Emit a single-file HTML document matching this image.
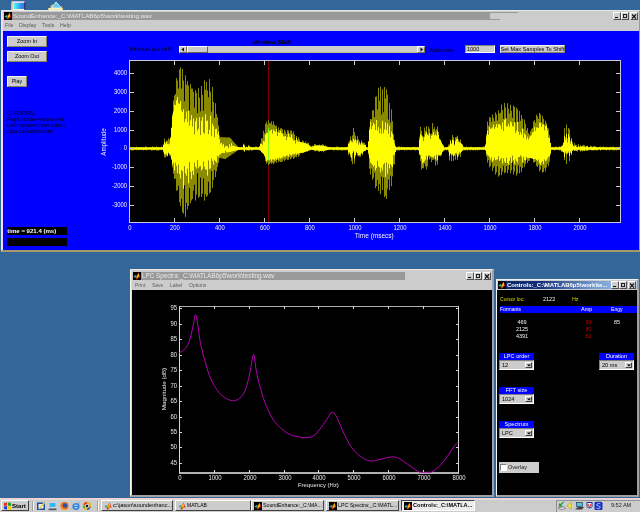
<!DOCTYPE html><html><head><meta charset="utf-8"><style>
html,body{margin:0;padding:0;}body{width:640px;height:512px;overflow:hidden;position:relative;background:#336699;}
div,svg{position:absolute;}.t{white-space:nowrap;font-family:"Liberation Sans", sans-serif;line-height:1;}
</style></head><body>
<svg style="left:0;top:0" width="70" height="11" viewBox="0 0 70 11"><defs><linearGradient id="scr" x1="0" x2="1"><stop offset="0" stop-color="#50f8ff"/><stop offset="1" stop-color="#2070e8"/></linearGradient></defs><rect x="11.5" y="1.2" width="13" height="8.8" fill="#dcdcf0"/><rect x="11.3" y="3" width="1.5" height="7" fill="#d8d090"/><rect x="23.8" y="2.5" width="1.8" height="7" fill="#40307a"/><rect x="14" y="3" width="9.8" height="6" fill="url(#scr)"/><rect x="13" y="9" width="11" height="1" fill="#fff8c0"/><path d="M50 7.5 Q50.5 4 53.5 4.5 L53 8Z" fill="#c8c050"/><path d="M61 5.5 Q63 6 62.8 8.5 L61 8.5Z" fill="#a09030"/><rect x="48.3" y="8" width="14.4" height="2.2" fill="#f8f0a0"/><path d="M56 2 L61.5 8 L51.5 8Z" fill="#60c8f8" stroke="#e8f0ff" stroke-width="0.9"/></svg>
<div style="left:1px;top:10px;width:639px;height:242px;background:#cccccc;border-left:1px solid #e8e8e8;border-top:1px solid #e8e8e8;border-right:1px solid #a0a070;border-bottom:2px solid #a89868;box-sizing:border-box"></div>
<div style="left:2px;top:11px;width:1px;height:239px;background:#f0d8f0"></div>
<div style="left:3px;top:11px;width:636px;height:9px;background:#cccccc"></div>
<div style="left:4px;top:12px;width:486px;height:8px;background:#999999"></div>
<div style="left:490px;top:12px;width:28px;height:1px;background:#999999"></div>
<div style="left:490px;top:19px;width:10px;height:1px;background:#999999"></div>
<svg style="left:4px;top:12px" width="8" height="8" viewBox="0 0 16 16"><rect width="16" height="16" fill="#000"/><path d="M1 9 L5 6 L8 8 L6 11 L3 11 Z" fill="#40a8a0"/><path d="M5 14 L8 7 L11 1 L13 6 L15 12 L12 10 L8 15 Z" fill="#d02800"/><path d="M7 12 L9 6 L11 2 L12 7 L11 10 L8 12Z" fill="#ffd000"/></svg>
<div class="t" style="left:13px;top:12.8px;font-size:6.26px;color:#e8e8e8;">SoundEnhance:_C:\MATLAB6p5\work\testing.wav</div>
<div style="left:613px;top:12px;width:8px;height:8px;background:#cccccc;border-top:1px solid #fff;border-left:1px solid #fff;border-right:1px solid #505050;border-bottom:1px solid #505050;box-sizing:border-box"></div>
<div style="left:621px;top:12px;width:8px;height:8px;background:#cccccc;border-top:1px solid #fff;border-left:1px solid #fff;border-right:1px solid #505050;border-bottom:1px solid #505050;box-sizing:border-box"></div>
<div style="left:630px;top:12px;width:8px;height:8px;background:#cccccc;border-top:1px solid #fff;border-left:1px solid #fff;border-right:1px solid #505050;border-bottom:1px solid #505050;box-sizing:border-box"></div>
<div style="left:615px;top:17px;width:3px;height:1px;background:#101010"></div>
<div style="left:623px;top:13.5px;width:4px;height:4px;border:1px solid #202020;border-top-width:1.5px;box-sizing:border-box"></div>
<svg style="left:631px;top:13.5px" width="6" height="5" viewBox="0 0 6 5"><path d="M1 0.5 L5 4.5 M5 0.5 L1 4.5" stroke="#101010" stroke-width="1.1"/></svg>
<div style="left:3px;top:20px;width:636px;height:11px;background:#cccccc"></div>
<div class="t" style="left:5px;top:23.4px;font-size:5.3px;color:#585858;">File</div>
<div class="t" style="left:19px;top:23.4px;font-size:5.3px;color:#585858;">Display</div>
<div class="t" style="left:42px;top:23.4px;font-size:5.3px;color:#585858;">Tools</div>
<div class="t" style="left:60px;top:23.4px;font-size:5.3px;color:#585858;">Help</div>
<div style="left:3px;top:31px;width:636px;height:219px;background:#0000ff"></div>
<div style="left:7px;top:36px;width:40px;height:11px;background:#cccccc;border-top:1px solid #f4f0f0;border-left:1px solid #f4f0f0;border-right:1px solid #8a8060;border-bottom:1px solid #8a8060;box-sizing:border-box"></div>
<div class="t" style="left:7px;top:39.475px;width:40px;text-align:center;font-size:5.45px;color:#000">Zoom In</div>
<div style="left:7px;top:51px;width:40px;height:11px;background:#cccccc;border-top:1px solid #f4f0f0;border-left:1px solid #f4f0f0;border-right:1px solid #8a8060;border-bottom:1px solid #8a8060;box-sizing:border-box"></div>
<div class="t" style="left:7px;top:54.475px;width:40px;text-align:center;font-size:5.45px;color:#000">Zoom Out</div>
<div style="left:7px;top:76px;width:20px;height:11px;background:#cccccc;border-top:1px solid #f4f0f0;border-left:1px solid #f4f0f0;border-right:1px solid #8a8060;border-bottom:1px solid #8a8060;box-sizing:border-box"></div>
<div class="t" style="left:7px;top:79.47500000000001px;width:20px;text-align:center;font-size:5.45px;color:#000">Play</div>
<div class="t" style="left:7px;top:110.8px;font-size:5.3px;color:#000;">CURSORS:</div>
<div class="t" style="left:7px;top:116.89999999999999px;font-size:5.3px;color:#000;">Right mouse=zoom end</div>
<div class="t" style="left:7px;top:123.0px;font-size:5.3px;color:#000;">Left mouse=zoom start +</div>
<div class="t" style="left:7px;top:129.1px;font-size:5.3px;color:#000;">data collection start</div>
<div style="left:7px;top:227px;width:60px;height:8px;background:#000"></div>
<div class="t" style="left:7.3px;top:227.6px;font-size:6.05px;color:#fff;font-weight:bold">time = 921.4 (ms)</div>
<div style="left:7px;top:238px;width:60px;height:8px;background:#000"></div>
<div class="t" style="left:253px;top:39.2px;font-size:6.0px;color:#000;font-weight:bold">Window Shift</div>
<div class="t" style="left:129.4px;top:47.4px;font-size:5.2px;color:#000;">Minimum (no shift)</div>
<div style="left:179px;top:46px;width:246px;height:7px;background:#cccccc;border-bottom:1px solid #c8c070;box-sizing:border-box"></div>
<div style="left:179px;top:46px;width:8px;height:7px;background:#cccccc;border-top:1px solid #fff;border-left:1px solid #fff;border-right:1px solid #7a7050;border-bottom:1px solid #7a7050;box-sizing:border-box"></div>
<svg style="left:181px;top:47px" width="4" height="5"><path d="M3 0.5 L0.5 2.5 L3 4.5Z" fill="#000"/></svg>
<div style="left:187px;top:46px;width:21px;height:7px;background:#cccccc;border-top:1px solid #fff;border-left:1px solid #fff;border-right:1px solid #6a6448;border-bottom:1px solid #6a6448;box-sizing:border-box"></div>
<div style="left:417px;top:46px;width:8px;height:7px;background:#cccccc;border-top:1px solid #fff;border-left:1px solid #fff;border-right:1px solid #7a7050;border-bottom:1px solid #7a7050;box-sizing:border-box"></div>
<svg style="left:420px;top:47px" width="4" height="5"><path d="M0.5 0.5 L3 2.5 L0.5 4.5Z" fill="#000"/></svg>
<div class="t" style="left:430.2px;top:47.6px;font-size:5.3px;color:#000;">Maximum</div>
<div style="left:465px;top:45px;width:30px;height:8px;background:#cccccc;border-top:1px solid #808080;border-left:1px solid #808080;border-right:1px solid #fff;border-bottom:1px solid #fff;box-sizing:border-box"></div>
<div class="t" style="left:467px;top:47px;font-size:5.5px;color:#000;">1000</div>
<div style="left:500px;top:45px;width:65px;height:8px;background:#cccccc;border-top:1px solid #f4f0f0;border-left:1px solid #f4f0f0;border-right:1px solid #8a8060;border-bottom:1px solid #8a8060;box-sizing:border-box"></div>
<div class="t" style="left:500px;top:46.900000000000006px;width:65px;text-align:center;font-size:5.6px;color:#000">Set Max Samples To Shift</div>
<div style="left:129px;top:60px;width:492px;height:163px;background:#000"></div>
<svg style="left:0;top:0" width="640" height="512"><g transform="translate(0.5,0)"><path d="M130 147.3V149.4M131 147.2V150.4M132 147.3V150.7M133 147.4V150.4M134 147.6V149.4M135 147.2V149.6M136 146.5V150.2M137 147.5V149.8M138 147.4V150.2M139 147.2V150.1M140 147.4V149.7M141 147.6V150.3M142 147.2V149.9M143 147.3V150.5M144 147.2V150.0M145 146.4V150.1M146 146.7V150.5M147 147.6V149.4M148 147.5V149.4M149 147.4V149.7M150 147.2V149.4M151 147.6V150.6M152 146.3V150.4M153 147.1V150.3M154 146.7V150.4M155 147.6V149.6M156 146.3V150.6M157 147.0V150.5M158 146.9V150.5M159 147.4V150.3M160 147.5V149.5M161 146.3V150.1M162 146.9V149.9M163 144.1V152.7M164 138.5V157.3M165 142.4V157.5M166 140.3V156.2M167 140.7V156.5M168 138.3V153.4M169 139.5V155.4M170 137.2V156.6M171 127.5V160.0M172 113.7V167.4M173 100.4V173.9M174 95.5V179.1M175 94.0V178.4M176 78.0V190.8M177 80.5V190.1M178 88.6V185.9M179 69.5V202.4M180 67.4V206.1M181 88.5V198.8M182 69.0V212.2M183 80.5V213.7M184 101.2V185.3M185 75.3V216.9M186 84.6V202.8M187 80.9V209.4M188 85.6V205.8M189 110.7V187.9M190 83.9V203.2M191 88.6V200.5M192 88.6V199.1M193 91.7V190.8M194 107.6V184.7M195 90.1V200.6M196 92.7V194.7M197 113.1V173.2M198 88.1V197.7M199 97.6V196.7M200 111.3V177.7M201 86.0V197.1M202 94.8V193.8M203 110.5V178.4M204 80.5V200.7M205 89.9V194.3M206 82.0V196.9M207 90.4V195.7M208 97.4V181.7M209 79.1V193.3M210 91.6V192.3M211 111.6V171.2M212 86.8V187.9M213 102.0V179.9M214 118.0V170.1M215 103.2V177.1M216 113.9V171.4M217 117.2V166.9M218 125.5V162.9M219 135.4V158.4M220 137.1V157.8M221 137.1V158.3M222 137.2V158.6M223 137.3V158.8M224 137.3V159.1M225 137.3V158.9M226 137.4V158.2M227 137.4V157.5M228 137.4V156.8M229 137.5V156.1M230 138.1V155.4M231 139.3V154.7M232 140.5V154.1M233 141.7V153.4M234 142.9V152.7M235 144.0V152.0M236 145.2V151.3M237 146.3V150.7M238 147.0V149.9M239 147.5V149.7M240 147.2V149.9M241 146.7V150.0M242 147.5V150.2M243 143.6V150.7M244 144.6V152.1M245 147.2V149.9M246 146.5V150.7M247 147.2V150.2M248 145.0V150.7M249 145.9V150.6M250 146.7V149.8M251 146.9V150.7M252 147.2V150.4M253 147.1V150.1M254 147.5V149.6M255 146.4V149.5M256 146.4V149.7M257 147.5V149.7M258 147.1V149.7M259 146.0V150.3M260 143.7V150.7M261 138.2V152.2M262 138.5V153.2M263 130.7V153.5M264 133.2V156.2M265 123.8V161.3M266 121.5V163.7M267 124.4V162.3M268 120.2V165.0M269 122.8V164.2M270 123.3V163.1M271 121.4V163.9M272 124.6V162.9M273 121.3V164.4M274 124.8V162.8M275 125.9V161.6M276 125.6V162.8M277 131.7V159.9M278 127.3V162.4M279 130.0V161.0M280 128.3V162.0M281 128.2V162.0M282 129.2V161.6M283 133.3V159.5M284 129.7V161.2M285 131.4V159.9M286 133.8V158.7M287 129.9V160.1M288 130.4V159.8M289 133.7V157.3M290 130.5V159.3M291 130.5V158.4M292 133.5V156.9M293 131.5V158.9M294 134.5V158.0M295 140.2V156.6M296 136.1V157.3M297 139.6V155.0M298 137.3V157.0M299 139.4V155.6M300 142.6V152.4M301 142.5V152.7M302 140.3V153.6M303 141.3V153.0M304 143.8V151.8M305 141.3V151.5M306 143.8V151.2M307 142.5V151.9M308 142.7V150.3M309 145.2V150.3M310 145.8V150.3M311 146.3V149.6M312 145.4V149.8M313 146.5V150.0M314 143.9V151.1M315 144.2V151.3M316 145.4V150.1M317 145.2V150.3M318 144.9V151.7M319 144.5V152.1M320 145.9V151.0M321 145.2V151.6M322 144.3V151.0M323 144.6V152.3M324 145.7V151.2M325 145.5V150.5M326 146.6V150.3M327 146.9V149.9M328 146.9V149.8M329 146.9V149.6M330 147.2V149.6M331 147.4V149.7M332 147.4V149.6M333 147.3V150.6M334 147.5V150.4M335 147.4V149.4M336 146.5V150.3M337 146.5V150.3M338 147.2V150.5M339 147.6V149.8M340 147.6V150.4M341 147.2V150.6M342 146.9V150.6M343 147.6V150.2M344 147.1V150.3M345 147.4V150.4M346 146.9V150.3M347 146.6V150.2M348 142.6V155.0M349 140.9V153.6M350 136.4V157.2M351 140.3V161.3M352 135.4V164.1M353 127.9V152.3M354 132.3V163.5M355 135.7V156.6M356 139.8V153.1M357 136.2V155.7M358 139.4V156.3M359 141.1V156.6M360 143.3V156.8M361 140.2V153.6M362 142.1V155.0M363 142.7V152.2M364 142.8V151.2M365 144.4V151.1M366 147.0V149.9M367 147.3V150.0M368 140.9V154.8M369 127.2V168.6M370 119.0V174.4M371 119.3V168.6M372 110.4V179.6M373 110.1V177.8M374 117.2V172.7M375 96.9V188.2M376 96.3V186.1M377 109.5V180.0M378 87.9V190.9M379 100.9V184.1M380 86.7V194.3M381 114.7V176.7M382 89.3V190.0M383 112.3V177.6M384 87.0V197.2M385 98.4V195.8M386 89.3V199.0M387 94.5V188.6M388 119.5V179.5M389 103.0V190.3M390 122.7V175.7M391 109.4V186.1M392 121.2V176.3M393 134.5V164.1M394 139.9V164.7M395 146.1V151.6M396 147.5V150.4M397 147.3V150.6M398 146.3V150.3M399 146.4V150.6M400 147.6V149.8M401 146.4V150.1M402 147.4V150.1M403 147.1V149.8M404 147.0V150.6M405 147.5V149.5M406 147.1V150.4M407 147.2V149.9M408 147.1V149.7M409 147.1V149.8M410 147.6V150.5M411 147.6V149.5M412 146.9V150.0M413 146.7V149.8M414 147.6V150.3M415 146.7V150.5M416 147.4V149.7M417 147.1V149.8M418 147.0V150.5M419 136.8V155.3M420 126.9V161.0M421 130.9V169.4M422 135.6V168.1M423 136.6V168.3M424 127.6V163.7M425 130.9V166.5M426 126.1V169.3M427 133.7V166.4M428 126.6V156.7M429 128.7V159.5M430 134.4V158.1M431 133.6V162.1M432 123.0V159.9M433 129.0V159.6M434 127.2V159.4M435 130.5V165.7M436 129.2V161.2M437 126.5V164.6M438 131.9V156.2M439 138.4V156.0M440 139.7V156.3M441 141.7V155.4M442 144.2V152.4M443 145.4V151.2M444 147.4V150.5M445 147.0V149.9M446 147.2V150.6M447 146.8V149.8M448 144.8V152.3M449 144.1V160.5M450 139.6V153.8M451 143.2V161.3M452 135.1V155.3M453 137.3V160.9M454 144.3V156.2M455 137.2V159.7M456 136.9V154.8M457 135.7V159.8M458 139.6V156.4M459 141.4V154.4M460 139.3V157.0M461 143.1V152.1M462 144.2V150.8M463 146.5V150.5M464 146.9V150.3M465 147.3V150.3M466 146.4V150.2M467 147.6V150.6M468 147.0V149.4M469 147.4V150.1M470 146.7V150.6M471 146.7V149.4M472 147.5V150.4M473 147.5V150.5M474 147.0V149.7M475 147.2V150.7M476 147.1V149.6M477 147.1V150.3M478 147.4V150.3M479 146.8V149.9M480 147.3V149.6M481 147.3V149.5M482 147.4V149.5M483 146.4V149.7M484 146.3V149.7M485 143.9V150.3M486 134.0V156.4M487 121.5V162.6M488 125.6V160.1M489 117.1V167.3M490 117.5V166.2M491 121.9V162.6M492 114.4V171.1M493 117.8V167.8M494 121.1V166.1M495 112.4V174.5M496 114.4V172.3M497 120.6V166.2M498 110.3V176.7M499 113.3V175.3M500 112.8V168.3M501 104.5V175.2M502 109.9V171.5M503 118.8V165.8M504 103.0V173.2M505 107.5V172.5M506 118.2V166.1M507 103.2V173.2M508 108.7V169.7M509 113.4V165.0M510 104.7V173.2M511 110.9V170.4M512 117.7V162.2M513 105.5V174.6M514 106.9V171.3M515 122.4V165.3M516 107.6V175.7M517 109.4V173.3M518 121.8V165.3M519 111.1V173.4M520 120.8V166.8M521 115.0V172.2M522 118.8V168.0M523 128.6V163.1M524 119.5V167.1M525 123.8V164.1M526 130.2V159.7M527 127.9V163.0M528 133.1V161.0M529 134.7V160.6M530 131.2V157.6M531 129.1V158.4M532 128.1V158.4M533 121.5V162.5M534 120.2V162.3M535 122.8V161.4M536 114.7V165.9M537 116.4V167.1M538 118.9V164.9M539 112.9V171.3M540 114.3V169.7M541 122.3V165.7M542 115.8V172.5M543 118.8V172.0M544 124.3V168.3M545 120.6V171.4M546 123.1V167.5M547 127.7V163.5M548 128.6V165.9M549 135.1V161.5M550 142.8V154.9M551 147.6V150.0M552 146.9V150.1M553 147.5V149.4M554 147.4V150.5M555 146.6V149.6M556 146.5V149.6M557 147.6V149.7M558 146.8V149.8M559 146.3V150.6M560 146.9V150.3M561 145.9V151.9M562 144.8V152.0M563 142.1V152.7M564 128.0V160.0M565 137.4V153.8M566 124.6V164.0M567 138.4V154.1M568 127.9V153.1M569 129.3V161.0M570 141.0V153.1M571 138.0V155.1M572 142.1V150.9M573 145.4V150.3M574 143.1V151.0M575 144.8V150.8M576 145.0V150.9M577 146.7V151.5M578 143.9V150.0M579 146.6V150.2M580 145.2V151.7M581 146.2V150.7M582 145.6V151.5M583 144.8V150.7M584 145.3V151.1M585 146.6V150.7M586 145.9V150.8M587 145.6V151.0M588 147.0V150.3M589 146.9V150.3M590 145.5V149.9M591 146.2V150.5M592 146.8V150.4M593 146.2V150.6M594 146.0V150.3M595 146.5V150.1M596 146.8V150.6M597 147.1V150.3M598 147.0V149.7M599 146.8V149.6M600 146.5V150.5M601 147.2V149.4M602 147.0V149.5M603 146.3V149.4M604 147.2V149.7M605 147.1V149.8M606 146.8V150.6M607 147.6V149.5M608 147.3V149.5M609 147.3V150.5M610 146.7V149.8M611 147.5V149.4M612 146.5V150.2M613 146.6V150.4M614 147.6V150.4M615 147.6V149.6M616 147.4V150.5M617 147.2V150.0M618 147.6V149.8M619 146.9V149.8" stroke="#8a8a00" stroke-width="1"/><path d="M130 147.3V149.7M131 147.3V149.7M132 147.3V149.7M133 147.3V149.7M134 147.3V149.7M135 147.3V149.7M136 147.3V149.7M137 147.3V149.7M138 147.3V149.7M139 147.3V149.7M140 147.3V149.7M141 147.3V149.7M142 147.3V149.7M143 147.3V149.7M144 147.3V149.7M145 147.3V149.7M146 147.3V149.7M147 147.3V149.7M148 147.3V149.7M149 147.3V149.7M150 147.3V149.7M151 147.3V149.7M152 147.3V149.7M153 147.3V149.7M154 147.3V149.7M155 147.3V149.7M156 147.3V149.7M157 147.3V149.7M158 147.3V149.7M159 147.3V149.7M160 147.3V149.7M161 147.3V149.7M162 147.3V149.7M163 145.3V151.4M164 141.8V154.4M165 143.8V154.4M166 141.8V153.8M167 143.9V155.7M168 144.3V152.6M169 143.4V153.8M170 138.0V154.7M171 127.9V158.9M172 116.2V164.6M173 111.4V162.7M174 104.8V170.6M175 105.3V162.6M176 100.2V165.8M177 97.0V173.0M178 103.3V164.4M179 104.0V174.1M180 101.0V178.7M181 110.3V170.1M182 112.0V171.2M183 109.3V188.6M184 122.2V166.1M185 118.8V173.5M186 111.4V175.8M187 122.0V168.5M188 110.6V183.2M189 125.7V161.8M190 120.4V171.9M191 115.2V178.9M192 126.5V170.8M193 118.6V175.0M194 134.4V162.6M195 121.3V166.8M196 118.0V168.7M197 130.6V159.9M198 128.8V167.9M199 117.2V166.3M200 135.1V165.9M201 120.7V170.6M202 116.9V169.1M203 132.6V161.4M204 133.6V166.7M205 114.1V169.6M206 120.9V169.6M207 120.5V175.7M208 134.1V160.5M209 129.7V169.2M210 115.6V168.3M211 135.9V158.6M212 123.6V161.2M213 125.9V164.7M214 137.1V159.9M215 129.0V161.4M216 128.7V162.6M217 134.2V155.8M218 131.6V156.7M219 139.2V154.7M220 143.5V154.4M221 142.7V153.1M222 145.2V153.0M223 143.9V152.9M224 147.5V153.1M225 146.1V150.9M226 146.0V152.5M227 146.2V152.3M228 148.1V152.2M229 144.2V152.1M230 146.6V151.9M231 143.2V151.6M232 145.7V151.3M233 145.9V151.1M234 146.2V150.8M235 146.4V150.6M236 146.7V150.3M237 146.9V150.1M238 147.0V150.0M239 147.2V149.8M240 147.3V149.7M241 147.3V149.7M242 147.3V149.7M243 144.8V149.7M244 146.0V151.1M245 147.5V149.5M246 147.0V149.7M247 147.3V150.0M248 146.3V149.9M249 146.7V149.8M250 147.4V149.6M251 147.2V149.9M252 147.3V149.7M253 147.3V149.7M254 147.3V149.7M255 147.3V149.7M256 147.3V149.7M257 147.3V149.7M258 147.3V149.7M259 146.7V149.9M260 143.6V150.7M261 144.0V151.8M262 144.9V152.9M263 141.1V154.0M264 141.6V155.6M265 134.8V157.8M266 133.0V161.1M267 132.7V160.0M268 128.4V160.5M269 131.1V160.4M270 130.3V159.3M271 129.6V161.3M272 133.6V159.3M273 129.4V159.5M274 130.9V160.5M275 132.0V158.6M276 129.0V159.9M277 136.0V158.0M278 132.0V159.4M279 132.9V157.5M280 130.8V158.6M281 133.0V157.9M282 133.8V157.5M283 136.5V156.2M284 136.3V156.8M285 136.1V156.5M286 139.9V155.6M287 136.9V155.5M288 133.5V156.8M289 136.8V154.5M290 137.4V154.7M291 134.8V156.0M292 138.5V154.1M293 140.7V154.4M294 140.2V154.4M295 143.6V153.4M296 138.1V154.8M297 141.3V153.2M298 141.7V153.9M299 141.6V153.1M300 142.0V153.1M301 142.3V152.8M302 142.5V152.6M303 142.8V152.4M304 143.0V152.2M305 143.3V151.8M306 143.6V151.4M307 144.0V151.0M308 144.6V150.7M309 145.6V150.3M310 146.7V149.9M311 147.1V149.8M312 146.6V149.9M313 146.2V150.1M314 145.7V150.3M315 145.5V150.4M316 145.5V150.5M317 145.5V150.6M318 145.5V150.7M319 145.5V150.8M320 145.5V150.9M321 145.5V150.9M322 145.6V150.9M323 145.8V150.7M324 146.0V150.6M325 146.3V150.4M326 146.5V150.2M327 146.8V150.1M328 147.0V149.9M329 147.2V149.7M330 147.3V149.7M331 147.3V149.7M332 147.3V149.7M333 147.3V149.7M334 147.3V149.7M335 147.3V149.7M336 147.3V149.7M337 147.3V149.7M338 147.3V149.7M339 147.3V149.7M340 147.3V149.7M341 147.3V149.7M342 147.3V149.7M343 147.3V149.7M344 147.3V149.7M345 147.3V149.7M346 147.3V149.7M347 147.0V149.6M348 144.1V152.7M349 143.2V152.3M350 140.3V154.8M351 141.7V157.8M352 142.4V153.3M353 138.9V150.7M354 140.7V158.8M355 139.3V155.0M356 142.8V151.7M357 140.3V153.1M358 144.8V155.1M359 142.9V155.0M360 144.8V154.6M361 142.6V152.8M362 144.2V153.6M363 144.7V151.4M364 144.9V150.9M365 145.3V150.6M366 147.4V149.6M367 147.5V149.6M368 141.7V152.8M369 130.0V158.3M370 121.6V162.7M371 129.1V163.6M372 126.0V164.8M373 122.8V166.8M374 124.3V165.3M375 130.1V170.5M376 120.0V168.0M377 130.4V160.8M378 127.2V166.2M379 133.2V167.5M380 128.7V172.5M381 133.7V167.7M382 120.8V170.5M383 133.3V164.6M384 129.4V163.0M385 122.2V176.9M386 130.0V162.3M387 123.5V173.7M388 133.8V164.0M389 125.8V168.3M390 137.1V164.1M391 131.4V165.6M392 133.6V167.3M393 139.9V154.7M394 143.4V155.4M395 146.2V152.2M396 147.3V149.7M397 147.3V149.7M398 147.3V149.7M399 147.3V149.7M400 147.3V149.7M401 147.3V149.7M402 147.3V149.7M403 147.3V149.7M404 147.3V149.7M405 147.3V149.7M406 147.3V149.7M407 147.3V149.7M408 147.3V149.7M409 147.3V149.7M410 147.3V149.7M411 147.3V149.7M412 147.3V149.7M413 147.3V149.7M414 147.3V149.7M415 147.3V149.7M416 147.3V149.7M417 147.3V149.7M418 147.3V150.2M419 139.5V153.9M420 133.9V155.0M421 135.3V159.1M422 137.2V163.3M423 141.1V162.3M424 136.9V161.1M425 133.8V159.6M426 131.9V155.9M427 134.9V159.6M428 135.6V155.5M429 133.1V155.4M430 138.8V156.2M431 135.7V156.7M432 134.6V157.0M433 131.9V157.6M434 135.3V155.8M435 134.3V159.4M436 135.7V154.6M437 131.2V160.1M438 134.8V154.7M439 139.3V154.8M440 140.2V155.0M441 142.6V153.9M442 144.5V151.9M443 145.9V150.5M444 147.5V149.8M445 147.4V149.5M446 147.3V149.7M447 147.1V149.6M448 146.8V150.3M449 146.0V156.1M450 140.9V153.3M451 144.1V155.1M452 139.9V154.0M453 140.3V156.1M454 145.5V154.7M455 140.9V153.1M456 139.1V152.9M457 138.6V157.2M458 142.1V154.2M459 142.3V152.2M460 142.8V153.1M461 144.0V151.5M462 145.1V150.6M463 147.3V149.6M464 147.2V150.0M465 147.3V149.7M466 147.3V149.7M467 147.3V149.7M468 147.3V149.7M469 147.3V149.7M470 147.3V149.7M471 147.3V149.7M472 147.3V149.7M473 147.3V149.7M474 147.3V149.7M475 147.3V149.7M476 147.3V149.7M477 147.3V149.7M478 147.3V149.7M479 147.3V149.7M480 147.3V149.7M481 147.3V149.7M482 147.3V149.7M483 147.3V149.7M484 147.3V149.7M485 145.5V150.4M486 136.6V153.3M487 130.9V155.1M488 134.7V155.6M489 127.1V157.1M490 128.9V159.6M491 128.3V157.3M492 127.5V161.7M493 124.6V160.3M494 128.9V157.7M495 127.1V160.2M496 124.0V159.8M497 127.8V159.3M498 124.1V156.2M499 124.2V160.9M500 125.5V159.2M501 129.0V157.9M502 122.5V163.5M503 130.9V158.1M504 119.9V161.5M505 118.8V163.0M506 126.6V157.8M507 126.3V163.1M508 123.8V164.5M509 126.6V160.7M510 121.4V157.4M511 122.4V162.9M512 126.2V155.6M513 126.6V160.2M514 122.1V163.9M515 132.9V159.2M516 130.7V161.1M517 122.1V162.8M518 131.8V157.1M519 134.7V157.0M520 132.3V155.3M521 134.6V156.6M522 128.7V162.3M523 138.0V156.6M524 133.5V159.9M525 134.7V160.6M526 139.2V156.9M527 136.7V158.0M528 139.6V157.9M529 137.5V157.9M530 136.0V158.0M531 135.2V158.3M532 132.3V158.6M533 132.2V159.2M534 127.0V159.1M535 131.0V158.9M536 127.4V160.0M537 127.5V160.8M538 128.2V159.5M539 122.9V163.1M540 122.7V164.9M541 127.0V162.6M542 124.4V161.2M543 124.4V164.3M544 130.5V159.4M545 126.0V161.3M546 125.6V160.5M547 130.5V158.4M548 137.8V156.7M549 138.0V156.5M550 143.0V153.1M551 147.3V149.7M552 147.3V149.7M553 147.3V149.7M554 147.3V149.7M555 147.3V149.7M556 147.3V149.7M557 147.3V149.7M558 147.3V149.7M559 147.3V149.7M560 147.1V149.8M561 146.3V150.6M562 146.1V150.9M563 143.2V152.0M564 135.8V157.1M565 139.9V151.6M566 134.1V153.7M567 142.5V152.7M568 134.2V151.4M569 136.8V156.0M570 143.6V151.6M571 139.7V153.5M572 144.2V150.7M573 146.3V149.8M574 146.4V150.4M575 145.7V150.2M576 147.0V150.4M577 147.4V150.2M578 146.3V149.6M579 147.0V149.7M580 146.5V150.5M581 146.7V150.2M582 146.3V150.5M583 146.5V150.1M584 146.6V150.5M585 147.1V149.7M586 146.4V150.2M587 146.4V150.0M588 147.4V150.0M589 147.4V149.7M590 146.9V149.7M591 147.1V149.8M592 147.4V150.0M593 146.9V149.9M594 146.9V149.9M595 147.0V149.7M596 147.1V150.1M597 147.5V149.9M598 147.3V149.6M599 147.1V149.5M600 147.3V150.1M601 147.3V149.7M602 147.3V149.7M603 147.3V149.7M604 147.3V149.7M605 147.3V149.7M606 147.3V149.7M607 147.3V149.7M608 147.3V149.7M609 147.3V149.7M610 147.3V149.7M611 147.3V149.7M612 147.3V149.7M613 147.3V149.7M614 147.3V149.7M615 147.3V149.7M616 147.3V149.7M617 147.3V149.7M618 147.3V149.7M619 147.3V149.7" stroke="#ffff00" stroke-width="1"/></g></svg>
<div style="left:268px;top:61px;width:1px;height:161px;background:#ff0000;opacity:0.5;mix-blend-mode:difference"></div>
<div style="left:129px;top:60px;width:492px;height:1px;background:#c8c8d8"></div>
<div style="left:129px;top:222px;width:492px;height:1px;background:#c8c8d8"></div>
<div style="left:129px;top:60px;width:1px;height:163px;background:#c8c8d8"></div>
<div style="left:620px;top:60px;width:1px;height:163px;background:#c8c8d8"></div>
<div style="left:129px;top:205px;width:5px;height:1px;background:#c8c8d8"></div>
<div style="left:616px;top:205px;width:5px;height:1px;background:#c8c8d8"></div>
<div class="t" style="left:67.2px;top:202.2px;width:60px;text-align:right;font-size:6.8px;color:#f0f0ff;transform:scaleX(0.86);transform-origin:right">-3000</div>
<div style="left:129px;top:186px;width:5px;height:1px;background:#c8c8d8"></div>
<div style="left:616px;top:186px;width:5px;height:1px;background:#c8c8d8"></div>
<div class="t" style="left:67.2px;top:183.2px;width:60px;text-align:right;font-size:6.8px;color:#f0f0ff;transform:scaleX(0.86);transform-origin:right">-2000</div>
<div style="left:129px;top:167px;width:5px;height:1px;background:#c8c8d8"></div>
<div style="left:616px;top:167px;width:5px;height:1px;background:#c8c8d8"></div>
<div class="t" style="left:67.2px;top:164.2px;width:60px;text-align:right;font-size:6.8px;color:#f0f0ff;transform:scaleX(0.86);transform-origin:right">-1000</div>
<div style="left:129px;top:148px;width:5px;height:1px;background:#c8c8d8"></div>
<div style="left:616px;top:148px;width:5px;height:1px;background:#c8c8d8"></div>
<div class="t" style="left:67.2px;top:145.2px;width:60px;text-align:right;font-size:6.8px;color:#f0f0ff;transform:scaleX(0.86);transform-origin:right">0</div>
<div style="left:129px;top:130px;width:5px;height:1px;background:#c8c8d8"></div>
<div style="left:616px;top:130px;width:5px;height:1px;background:#c8c8d8"></div>
<div class="t" style="left:67.2px;top:127.2px;width:60px;text-align:right;font-size:6.8px;color:#f0f0ff;transform:scaleX(0.86);transform-origin:right">1000</div>
<div style="left:129px;top:111px;width:5px;height:1px;background:#c8c8d8"></div>
<div style="left:616px;top:111px;width:5px;height:1px;background:#c8c8d8"></div>
<div class="t" style="left:67.2px;top:108.2px;width:60px;text-align:right;font-size:6.8px;color:#f0f0ff;transform:scaleX(0.86);transform-origin:right">2000</div>
<div style="left:129px;top:92px;width:5px;height:1px;background:#c8c8d8"></div>
<div style="left:616px;top:92px;width:5px;height:1px;background:#c8c8d8"></div>
<div class="t" style="left:67.2px;top:89.2px;width:60px;text-align:right;font-size:6.8px;color:#f0f0ff;transform:scaleX(0.86);transform-origin:right">3000</div>
<div style="left:129px;top:73px;width:5px;height:1px;background:#c8c8d8"></div>
<div style="left:616px;top:73px;width:5px;height:1px;background:#c8c8d8"></div>
<div class="t" style="left:67.2px;top:70.2px;width:60px;text-align:right;font-size:6.8px;color:#f0f0ff;transform:scaleX(0.86);transform-origin:right">4000</div>
<div style="left:129px;top:60px;width:1px;height:5px;background:#c8c8d8"></div>
<div style="left:129px;top:218px;width:1px;height:5px;background:#c8c8d8"></div>
<div class="t" style="left:89.5px;top:224.8px;width:80px;text-align:center;font-size:6.8px;color:#f0f0ff;transform:scaleX(0.86)">0</div>
<div style="left:174px;top:60px;width:1px;height:5px;background:#c8c8d8"></div>
<div style="left:174px;top:218px;width:1px;height:5px;background:#c8c8d8"></div>
<div class="t" style="left:134.5px;top:224.8px;width:80px;text-align:center;font-size:6.8px;color:#f0f0ff;transform:scaleX(0.86)">200</div>
<div style="left:219px;top:60px;width:1px;height:5px;background:#c8c8d8"></div>
<div style="left:219px;top:218px;width:1px;height:5px;background:#c8c8d8"></div>
<div class="t" style="left:179.5px;top:224.8px;width:80px;text-align:center;font-size:6.8px;color:#f0f0ff;transform:scaleX(0.86)">400</div>
<div style="left:264px;top:60px;width:1px;height:5px;background:#c8c8d8"></div>
<div style="left:264px;top:218px;width:1px;height:5px;background:#c8c8d8"></div>
<div class="t" style="left:224.5px;top:224.8px;width:80px;text-align:center;font-size:6.8px;color:#f0f0ff;transform:scaleX(0.86)">600</div>
<div style="left:309px;top:60px;width:1px;height:5px;background:#c8c8d8"></div>
<div style="left:309px;top:218px;width:1px;height:5px;background:#c8c8d8"></div>
<div class="t" style="left:269.5px;top:224.8px;width:80px;text-align:center;font-size:6.8px;color:#f0f0ff;transform:scaleX(0.86)">800</div>
<div style="left:354px;top:60px;width:1px;height:5px;background:#c8c8d8"></div>
<div style="left:354px;top:218px;width:1px;height:5px;background:#c8c8d8"></div>
<div class="t" style="left:314.5px;top:224.8px;width:80px;text-align:center;font-size:6.8px;color:#f0f0ff;transform:scaleX(0.86)">1000</div>
<div style="left:399px;top:60px;width:1px;height:5px;background:#c8c8d8"></div>
<div style="left:399px;top:218px;width:1px;height:5px;background:#c8c8d8"></div>
<div class="t" style="left:359.5px;top:224.8px;width:80px;text-align:center;font-size:6.8px;color:#f0f0ff;transform:scaleX(0.86)">1200</div>
<div style="left:444px;top:60px;width:1px;height:5px;background:#c8c8d8"></div>
<div style="left:444px;top:218px;width:1px;height:5px;background:#c8c8d8"></div>
<div class="t" style="left:404.5px;top:224.8px;width:80px;text-align:center;font-size:6.8px;color:#f0f0ff;transform:scaleX(0.86)">1400</div>
<div style="left:489px;top:60px;width:1px;height:5px;background:#c8c8d8"></div>
<div style="left:489px;top:218px;width:1px;height:5px;background:#c8c8d8"></div>
<div class="t" style="left:449.5px;top:224.8px;width:80px;text-align:center;font-size:6.8px;color:#f0f0ff;transform:scaleX(0.86)">1600</div>
<div style="left:534px;top:60px;width:1px;height:5px;background:#c8c8d8"></div>
<div style="left:534px;top:218px;width:1px;height:5px;background:#c8c8d8"></div>
<div class="t" style="left:494.5px;top:224.8px;width:80px;text-align:center;font-size:6.8px;color:#f0f0ff;transform:scaleX(0.86)">1800</div>
<div style="left:579px;top:60px;width:1px;height:5px;background:#c8c8d8"></div>
<div style="left:579px;top:218px;width:1px;height:5px;background:#c8c8d8"></div>
<div class="t" style="left:539.5px;top:224.8px;width:80px;text-align:center;font-size:6.8px;color:#f0f0ff;transform:scaleX(0.86)">2000</div>
<div class="t" style="left:334.2px;top:233.0px;width:80px;text-align:center;font-size:6.5px;color:#f0f0ff;">Time (msecs)</div>
<div class="t" style="left:103.4px;top:142px;font-size:7px;color:#f0f0ff;transform:translate(-50%,-50%) rotate(-90deg) scaleX(0.88)">Amplitude</div>
<div style="left:130px;top:269px;width:364px;height:228px;background:#cccccc;border-left:1px solid #f8f8e0;border-top:1px solid #f8e0e0;border-right:2px solid #a0a0a0;border-bottom:2px solid #a0a0a0;box-sizing:border-box"></div>
<div style="left:131px;top:270px;width:1px;height:225px;background:#f0d0d0"></div>
<div style="left:132px;top:271px;width:359px;height:9px;background:#cccccc"></div>
<div style="left:133px;top:272px;width:272px;height:8px;background:#999999"></div>
<svg style="left:133px;top:272px" width="8" height="8" viewBox="0 0 16 16"><rect width="16" height="16" fill="#000"/><path d="M1 9 L5 6 L8 8 L6 11 L3 11 Z" fill="#40a8a0"/><path d="M5 14 L8 7 L11 1 L13 6 L15 12 L12 10 L8 15 Z" fill="#d02800"/><path d="M7 12 L9 6 L11 2 L12 7 L11 10 L8 12Z" fill="#ffd000"/></svg>
<div class="t" style="left:142px;top:273.0px;font-size:6.3px;color:#e8e8e8;">LPC Spectra:_C:\MATLAB6p5\work\testing.wav</div>
<div style="left:466px;top:272px;width:8px;height:8px;background:#cccccc;border-top:1px solid #fff;border-left:1px solid #fff;border-right:1px solid #505050;border-bottom:1px solid #505050;box-sizing:border-box"></div>
<div style="left:474px;top:272px;width:8px;height:8px;background:#cccccc;border-top:1px solid #fff;border-left:1px solid #fff;border-right:1px solid #505050;border-bottom:1px solid #505050;box-sizing:border-box"></div>
<div style="left:483px;top:272px;width:8px;height:8px;background:#cccccc;border-top:1px solid #fff;border-left:1px solid #fff;border-right:1px solid #505050;border-bottom:1px solid #505050;box-sizing:border-box"></div>
<div style="left:468px;top:277px;width:3px;height:1px;background:#101010"></div>
<div style="left:476px;top:273.5px;width:4px;height:4px;border:1px solid #202020;border-top-width:1.5px;box-sizing:border-box"></div>
<svg style="left:484px;top:273.5px" width="6" height="5" viewBox="0 0 6 5"><path d="M1 0.5 L5 4.5 M5 0.5 L1 4.5" stroke="#101010" stroke-width="1.1"/></svg>
<div style="left:132px;top:280px;width:359px;height:10px;background:#cccccc"></div>
<div class="t" style="left:135px;top:283px;font-size:5.0px;color:#606060;">Print</div>
<div class="t" style="left:152px;top:283px;font-size:5.0px;color:#606060;">Save</div>
<div class="t" style="left:170px;top:283px;font-size:5.0px;color:#606060;">Label</div>
<div class="t" style="left:189px;top:283px;font-size:5.0px;color:#606060;">Options</div>
<div style="left:132px;top:290px;width:360px;height:205px;background:#000"></div>
<div style="left:179px;top:306px;width:280px;height:1px;background:#b0b0b0"></div>
<div style="left:179px;top:472px;width:280px;height:2px;background:#b0b0b0"></div>
<div style="left:179px;top:306px;width:1px;height:167px;background:#d8d8d8"></div>
<div style="left:458px;top:306px;width:1px;height:167px;background:#d8d8d8"></div>
<div style="left:179px;top:463px;width:3px;height:1px;background:#d8d8d8"></div>
<div style="left:456px;top:463px;width:3px;height:1px;background:#d8d8d8"></div>
<div class="t" style="left:117.19999999999999px;top:460.2px;width:60px;text-align:right;font-size:6.6px;color:#e8e8e8;transform:scaleX(0.9);transform-origin:right">45</div>
<div style="left:179px;top:447px;width:3px;height:1px;background:#d8d8d8"></div>
<div style="left:456px;top:447px;width:3px;height:1px;background:#d8d8d8"></div>
<div class="t" style="left:117.19999999999999px;top:444.2px;width:60px;text-align:right;font-size:6.6px;color:#e8e8e8;transform:scaleX(0.9);transform-origin:right">50</div>
<div style="left:179px;top:432px;width:3px;height:1px;background:#d8d8d8"></div>
<div style="left:456px;top:432px;width:3px;height:1px;background:#d8d8d8"></div>
<div class="t" style="left:117.19999999999999px;top:429.2px;width:60px;text-align:right;font-size:6.6px;color:#e8e8e8;transform:scaleX(0.9);transform-origin:right">55</div>
<div style="left:179px;top:417px;width:3px;height:1px;background:#d8d8d8"></div>
<div style="left:456px;top:417px;width:3px;height:1px;background:#d8d8d8"></div>
<div class="t" style="left:117.19999999999999px;top:414.2px;width:60px;text-align:right;font-size:6.6px;color:#e8e8e8;transform:scaleX(0.9);transform-origin:right">60</div>
<div style="left:179px;top:401px;width:3px;height:1px;background:#d8d8d8"></div>
<div style="left:456px;top:401px;width:3px;height:1px;background:#d8d8d8"></div>
<div class="t" style="left:117.19999999999999px;top:398.2px;width:60px;text-align:right;font-size:6.6px;color:#e8e8e8;transform:scaleX(0.9);transform-origin:right">65</div>
<div style="left:179px;top:386px;width:3px;height:1px;background:#d8d8d8"></div>
<div style="left:456px;top:386px;width:3px;height:1px;background:#d8d8d8"></div>
<div class="t" style="left:117.19999999999999px;top:383.2px;width:60px;text-align:right;font-size:6.6px;color:#e8e8e8;transform:scaleX(0.9);transform-origin:right">70</div>
<div style="left:179px;top:370px;width:3px;height:1px;background:#d8d8d8"></div>
<div style="left:456px;top:370px;width:3px;height:1px;background:#d8d8d8"></div>
<div class="t" style="left:117.19999999999999px;top:367.2px;width:60px;text-align:right;font-size:6.6px;color:#e8e8e8;transform:scaleX(0.9);transform-origin:right">75</div>
<div style="left:179px;top:355px;width:3px;height:1px;background:#d8d8d8"></div>
<div style="left:456px;top:355px;width:3px;height:1px;background:#d8d8d8"></div>
<div class="t" style="left:117.19999999999999px;top:352.2px;width:60px;text-align:right;font-size:6.6px;color:#e8e8e8;transform:scaleX(0.9);transform-origin:right">80</div>
<div style="left:179px;top:339px;width:3px;height:1px;background:#d8d8d8"></div>
<div style="left:456px;top:339px;width:3px;height:1px;background:#d8d8d8"></div>
<div class="t" style="left:117.19999999999999px;top:336.2px;width:60px;text-align:right;font-size:6.6px;color:#e8e8e8;transform:scaleX(0.9);transform-origin:right">85</div>
<div style="left:179px;top:324px;width:3px;height:1px;background:#d8d8d8"></div>
<div style="left:456px;top:324px;width:3px;height:1px;background:#d8d8d8"></div>
<div class="t" style="left:117.19999999999999px;top:321.2px;width:60px;text-align:right;font-size:6.6px;color:#e8e8e8;transform:scaleX(0.9);transform-origin:right">90</div>
<div style="left:179px;top:308px;width:3px;height:1px;background:#d8d8d8"></div>
<div style="left:456px;top:308px;width:3px;height:1px;background:#d8d8d8"></div>
<div class="t" style="left:117.19999999999999px;top:305.2px;width:60px;text-align:right;font-size:6.6px;color:#e8e8e8;transform:scaleX(0.9);transform-origin:right">95</div>
<div style="left:179px;top:306px;width:1px;height:3px;background:#d8d8d8"></div>
<div style="left:179px;top:470px;width:1px;height:3px;background:#d8d8d8"></div>
<div class="t" style="left:139.5px;top:474.8px;width:80px;text-align:center;font-size:6.6px;color:#e8e8e8;transform:scaleX(0.9)">0</div>
<div style="left:214px;top:306px;width:1px;height:3px;background:#d8d8d8"></div>
<div style="left:214px;top:470px;width:1px;height:3px;background:#d8d8d8"></div>
<div class="t" style="left:174.5px;top:474.8px;width:80px;text-align:center;font-size:6.6px;color:#e8e8e8;transform:scaleX(0.9)">1000</div>
<div style="left:249px;top:306px;width:1px;height:3px;background:#d8d8d8"></div>
<div style="left:249px;top:470px;width:1px;height:3px;background:#d8d8d8"></div>
<div class="t" style="left:209.5px;top:474.8px;width:80px;text-align:center;font-size:6.6px;color:#e8e8e8;transform:scaleX(0.9)">2000</div>
<div style="left:284px;top:306px;width:1px;height:3px;background:#d8d8d8"></div>
<div style="left:284px;top:470px;width:1px;height:3px;background:#d8d8d8"></div>
<div class="t" style="left:244.5px;top:474.8px;width:80px;text-align:center;font-size:6.6px;color:#e8e8e8;transform:scaleX(0.9)">3000</div>
<div style="left:318px;top:306px;width:1px;height:3px;background:#d8d8d8"></div>
<div style="left:318px;top:470px;width:1px;height:3px;background:#d8d8d8"></div>
<div class="t" style="left:278.5px;top:474.8px;width:80px;text-align:center;font-size:6.6px;color:#e8e8e8;transform:scaleX(0.9)">4000</div>
<div style="left:353px;top:306px;width:1px;height:3px;background:#d8d8d8"></div>
<div style="left:353px;top:470px;width:1px;height:3px;background:#d8d8d8"></div>
<div class="t" style="left:313.5px;top:474.8px;width:80px;text-align:center;font-size:6.6px;color:#e8e8e8;transform:scaleX(0.9)">5000</div>
<div style="left:388px;top:306px;width:1px;height:3px;background:#d8d8d8"></div>
<div style="left:388px;top:470px;width:1px;height:3px;background:#d8d8d8"></div>
<div class="t" style="left:348.5px;top:474.8px;width:80px;text-align:center;font-size:6.6px;color:#e8e8e8;transform:scaleX(0.9)">6000</div>
<div style="left:423px;top:306px;width:1px;height:3px;background:#d8d8d8"></div>
<div style="left:423px;top:470px;width:1px;height:3px;background:#d8d8d8"></div>
<div class="t" style="left:383.5px;top:474.8px;width:80px;text-align:center;font-size:6.6px;color:#e8e8e8;transform:scaleX(0.9)">7000</div>
<div style="left:458px;top:306px;width:1px;height:3px;background:#d8d8d8"></div>
<div style="left:458px;top:470px;width:1px;height:3px;background:#d8d8d8"></div>
<div class="t" style="left:418.5px;top:474.8px;width:80px;text-align:center;font-size:6.6px;color:#e8e8e8;transform:scaleX(0.9)">8000</div>
<div class="t" style="left:278.4px;top:482.6px;width:80px;text-align:center;font-size:5.95px;color:#e8e8e8;">Frequency (Hz)</div>
<div class="t" style="left:164px;top:389px;font-size:6.2px;color:#e8e8e8;transform:translate(-50%,-50%) rotate(-90deg)">Magnitude (dB)</div>
<svg style="left:0;top:0" width="640" height="512"><path d="M179.5 352.7 L180.4 352.2 L181.7 351.6 L183.1 350.8 L184.4 349.6 L185.6 348.2 L186.8 346.6 L187.9 344.6 L189.0 342.2 L190.0 339.1 L190.9 335.5 L191.8 331.7 L192.6 328.1 L193.4 324.1 L194.2 319.7 L194.9 316.1 L195.6 314.6 L196.3 315.8 L196.9 318.9 L197.5 323.0 L198.1 326.9 L198.6 330.5 L199.1 334.3 L199.6 338.2 L200.3 342.2 L201.1 346.1 L202.1 350.1 L203.1 354.2 L204.3 358.5 L205.6 363.2 L207.0 368.1 L208.5 373.0 L210.1 377.3 L211.8 381.1 L213.6 384.5 L215.4 387.5 L217.2 390.2 L218.9 392.4 L220.6 394.3 L222.4 395.8 L224.2 397.2 L226.2 398.5 L228.3 399.5 L230.4 400.3 L232.4 400.7 L234.3 400.7 L236.0 400.3 L237.8 399.5 L239.4 398.4 L241.0 397.0 L242.5 395.3 L243.9 393.0 L245.3 390.2 L246.6 386.5 L247.7 382.0 L248.9 377.3 L249.9 372.6 L250.9 367.3 L251.8 361.5 L252.7 356.6 L253.5 354.3 L254.1 355.4 L254.7 358.9 L255.2 363.6 L255.8 367.9 L256.5 371.7 L257.3 375.8 L258.2 380.0 L259.3 384.3 L260.6 388.9 L262.0 393.7 L263.5 398.5 L265.2 403.0 L267.0 407.4 L268.9 411.6 L270.8 415.6 L272.8 419.0 L274.7 421.8 L276.6 424.0 L278.5 426.0 L280.6 427.9 L282.8 429.8 L285.1 431.7 L287.6 433.3 L290.4 434.7 L293.6 435.8 L297.3 436.7 L300.9 437.3 L304.1 437.6 L306.9 437.6 L309.3 437.4 L311.6 436.8 L313.8 435.7 L315.9 434.0 L317.9 431.7 L319.8 429.3 L321.6 426.9 L323.2 424.6 L324.7 422.3 L326.1 420.1 L327.5 418.1 L328.8 416.1 L330.0 414.2 L331.2 412.8 L332.4 412.2 L333.6 412.7 L334.8 413.9 L336.0 415.8 L337.3 418.1 L338.6 421.0 L340.0 424.4 L341.5 428.1 L343.1 431.8 L344.9 435.5 L346.9 439.4 L348.9 443.1 L350.9 446.4 L352.9 449.1 L354.8 451.4 L356.8 453.4 L358.8 455.2 L360.7 456.7 L362.8 458.0 L364.7 459.1 L366.6 459.9 L368.3 460.5 L369.8 460.9 L371.4 461.0 L373.1 461.0 L375.0 460.7 L376.9 460.2 L379.0 459.6 L381.3 459.0 L384.1 458.4 L387.2 457.7 L390.2 457.2 L392.8 456.9 L394.8 457.0 L396.3 457.3 L397.8 457.8 L399.4 458.6 L401.3 459.7 L403.4 461.2 L405.5 462.8 L407.6 464.3 L409.7 465.8 L411.9 467.3 L414.0 468.8 L415.8 470.0 L417.3 470.9 L418.5 471.6 L419.6 472.2 L420.7 472.3 L421.9 472.3 L423.1 472.3 L424.3 472.3 L425.5 472.3 L426.7 472.3 L427.9 472.3 L429.1 472.3 L430.5 472.3 L432.0 471.9 L433.6 471.0 L435.3 469.9 L437.1 468.4 L439.0 466.6 L441.1 464.4 L443.2 462.0 L445.3 459.4 L447.4 456.4 L449.6 453.0 L451.7 449.7 L453.5 447.1 L455.0 445.2 L456.3 443.8 L457.4 442.8 L458.1 442.1" stroke="#b400b4" stroke-width="1" fill="none"/></svg>
<div style="left:496px;top:279px;width:143px;height:218px;background:#cccccc;border-left:1px solid #f0f8ff;border-top:1px solid #f0f0f0;border-right:2px solid #a0a0a0;border-bottom:2px solid #a0a0a0;box-sizing:border-box"></div>
<div style="left:498px;top:281px;width:139px;height:8px;background:linear-gradient(to right,#0a246a 0%,#14307a 30%,#6a90c8 65%,#a6caf0 95%)"></div>
<svg style="left:498px;top:281px" width="8" height="8" viewBox="0 0 16 16"><rect width="16" height="16" fill="#000"/><path d="M1 9 L5 6 L8 8 L6 11 L3 11 Z" fill="#40a8a0"/><path d="M5 14 L8 7 L11 1 L13 6 L15 12 L12 10 L8 15 Z" fill="#d02800"/><path d="M7 12 L9 6 L11 2 L12 7 L11 10 L8 12Z" fill="#ffd000"/></svg>
<div class="t" style="left:507px;top:282.2px;font-size:5.98px;color:#fff;font-weight:bold">Controls:_C:\MATLAB6p5\work\te...</div>
<div style="left:611px;top:281px;width:8px;height:8px;background:#cccccc;border-top:1px solid #fff;border-left:1px solid #fff;border-right:1px solid #505050;border-bottom:1px solid #505050;box-sizing:border-box"></div>
<div style="left:619px;top:281px;width:8px;height:8px;background:#cccccc;border-top:1px solid #fff;border-left:1px solid #fff;border-right:1px solid #505050;border-bottom:1px solid #505050;box-sizing:border-box"></div>
<div style="left:628px;top:281px;width:8px;height:8px;background:#cccccc;border-top:1px solid #fff;border-left:1px solid #fff;border-right:1px solid #505050;border-bottom:1px solid #505050;box-sizing:border-box"></div>
<div style="left:613px;top:286px;width:3px;height:1px;background:#101010"></div>
<div style="left:621px;top:282.5px;width:4px;height:4px;border:1px solid #202020;border-top-width:1.5px;box-sizing:border-box"></div>
<svg style="left:629px;top:282.5px" width="6" height="5" viewBox="0 0 6 5"><path d="M1 0.5 L5 4.5 M5 0.5 L1 4.5" stroke="#101010" stroke-width="1.1"/></svg>
<div style="left:497px;top:290px;width:140px;height:205px;background:#000"></div>
<div class="t" style="left:500px;top:296.8px;font-size:5.1px;color:#d8d800;">Cursor loc:</div>
<div class="t" style="left:543px;top:296.6px;font-size:5.5px;color:#f0f0f0;">2122</div>
<div class="t" style="left:572px;top:296.8px;font-size:5.3px;color:#d8d800;">Hz</div>
<div style="left:500px;top:306px;width:137px;height:7px;background:#0000ff"></div>
<div class="t" style="left:500px;top:307.4px;font-size:5.0px;color:#fff;">Formants</div>
<div class="t" style="left:581px;top:307.2px;font-size:5.5px;color:#fff;">Amp</div>
<div class="t" style="left:611px;top:307.4px;font-size:5.1px;color:#fff;">Engy</div>
<div class="t" style="left:482.0px;top:319.7px;width:80px;text-align:center;font-size:5.5px;color:#f0f0f0;">469</div>
<div class="t" style="left:548.5px;top:319.7px;width:80px;text-align:center;font-size:5.5px;color:#d00000;">93</div>
<div class="t" style="left:482.0px;top:327.0px;width:80px;text-align:center;font-size:5.5px;color:#f0f0f0;">2125</div>
<div class="t" style="left:548.5px;top:327.0px;width:80px;text-align:center;font-size:5.5px;color:#d00000;">80</div>
<div class="t" style="left:482.0px;top:334.3px;width:80px;text-align:center;font-size:5.5px;color:#f0f0f0;">4391</div>
<div class="t" style="left:548.5px;top:334.3px;width:80px;text-align:center;font-size:5.5px;color:#d00000;">61</div>
<div class="t" style="left:577.0px;top:319.7px;width:80px;text-align:center;font-size:5.5px;color:#f0f0f0;">85</div>
<div style="left:499px;top:353px;width:35px;height:7px;background:#0000ff"></div>
<div class="t" style="left:476.5px;top:353.9px;width:80px;text-align:center;font-size:5.6px;color:#fff;">LPC order</div>
<div style="left:499px;top:360px;width:35px;height:10px;background:#cccccc;border-top:1px solid #808080;border-left:1px solid #808080;border-right:1px solid #fff;border-bottom:1px solid #fff;box-sizing:border-box"></div>
<div class="t" style="left:502px;top:362.5px;font-size:5.6px;color:#000;">12</div>
<div style="left:525px;top:362px;width:7px;height:6px;background:#cccccc;border-top:1px solid #fff;border-left:1px solid #fff;border-right:1px solid #404040;border-bottom:1px solid #404040;box-sizing:border-box"></div>
<svg style="left:527px;top:364px" width="4" height="3"><path d="M0 0.5 L4 0.5 L2 2.5Z" fill="#000"/></svg>
<div style="left:599px;top:353px;width:35px;height:7px;background:#0000ff"></div>
<div class="t" style="left:576.5px;top:353.9px;width:80px;text-align:center;font-size:5.6px;color:#fff;">Duration</div>
<div style="left:599px;top:360px;width:35px;height:10px;background:#cccccc;border-top:1px solid #808080;border-left:1px solid #808080;border-right:1px solid #fff;border-bottom:1px solid #fff;box-sizing:border-box"></div>
<div class="t" style="left:602px;top:362.5px;font-size:5.6px;color:#000;">20 ms</div>
<div style="left:625px;top:362px;width:7px;height:6px;background:#cccccc;border-top:1px solid #fff;border-left:1px solid #fff;border-right:1px solid #404040;border-bottom:1px solid #404040;box-sizing:border-box"></div>
<svg style="left:627px;top:364px" width="4" height="3"><path d="M0 0.5 L4 0.5 L2 2.5Z" fill="#000"/></svg>
<div style="left:499px;top:387px;width:35px;height:7px;background:#0000ff"></div>
<div class="t" style="left:476.5px;top:387.9px;width:80px;text-align:center;font-size:5.6px;color:#fff;">FFT size</div>
<div style="left:499px;top:394px;width:35px;height:10px;background:#cccccc;border-top:1px solid #808080;border-left:1px solid #808080;border-right:1px solid #fff;border-bottom:1px solid #fff;box-sizing:border-box"></div>
<div class="t" style="left:502px;top:396.5px;font-size:5.6px;color:#000;">1024</div>
<div style="left:525px;top:396px;width:7px;height:6px;background:#cccccc;border-top:1px solid #fff;border-left:1px solid #fff;border-right:1px solid #404040;border-bottom:1px solid #404040;box-sizing:border-box"></div>
<svg style="left:527px;top:398px" width="4" height="3"><path d="M0 0.5 L4 0.5 L2 2.5Z" fill="#000"/></svg>
<div style="left:499px;top:421px;width:35px;height:7px;background:#0000ff"></div>
<div class="t" style="left:476.5px;top:421.9px;width:80px;text-align:center;font-size:5.6px;color:#fff;">Spectrum</div>
<div style="left:499px;top:428px;width:35px;height:10px;background:#cccccc;border-top:1px solid #808080;border-left:1px solid #808080;border-right:1px solid #fff;border-bottom:1px solid #fff;box-sizing:border-box"></div>
<div class="t" style="left:502px;top:430.5px;font-size:5.6px;color:#000;">LPC</div>
<div style="left:525px;top:430px;width:7px;height:6px;background:#cccccc;border-top:1px solid #fff;border-left:1px solid #fff;border-right:1px solid #404040;border-bottom:1px solid #404040;box-sizing:border-box"></div>
<svg style="left:527px;top:432px" width="4" height="3"><path d="M0 0.5 L4 0.5 L2 2.5Z" fill="#000"/></svg>
<div style="left:499px;top:462px;width:40px;height:11px;background:#cccccc"></div>
<div style="left:500px;top:464px;width:7px;height:7px;background:#fff;border-top:1px solid #808080;border-left:1px solid #808080;border-right:1px solid #fff;border-bottom:1px solid #fff;box-sizing:border-box"></div>
<div class="t" style="left:508px;top:465.4px;font-size:5.5px;color:#202020;">Overlay</div>
<div style="left:0px;top:498px;width:640px;height:14px;background:#cccccc"></div>
<div style="left:0px;top:498px;width:640px;height:1px;background:#ffd0d0"></div>
<div style="left:0px;top:499px;width:640px;height:1px;background:#e0d8d8"></div>
<div style="left:1px;top:500px;width:28px;height:11px;background:#cccccc;border-top:1px solid #fff;border-left:1px solid #fff;border-right:1px solid #404040;border-bottom:1px solid #404040;box-sizing:border-box"></div>
<svg style="left:3px;top:502px" width="9" height="8" viewBox="0 0 9 8"><path d="M1 1 L4 0.5 L4 3.5 L1 4Z" fill="#e03020"/><path d="M5 0.5 L8 1 L8 4 L5 3.5Z" fill="#20a020"/><path d="M1 4.5 L4 4 L4 7.5 L1 7Z" fill="#2040e0"/><path d="M5 4 L8 4.5 L8 7.5 L5 7.5Z" fill="#f0d000"/></svg>
<div class="t" style="left:12px;top:502.5px;font-size:6.1px;color:#000;font-weight:bold">Start</div>
<div style="left:32px;top:501px;width:1px;height:10px;background:#a0a0a0"></div>
<div style="left:33px;top:501px;width:1px;height:10px;background:#fff8e0"></div>
<svg style="left:36px;top:501px" width="60" height="10" viewBox="0 0 60 10"><rect x="1" y="1.5" width="8" height="7.5" fill="#1850a0"/><rect x="2.5" y="3" width="5" height="4.5" fill="#e8f0ff"/><path d="M3 8 L8.5 1.5" stroke="#f0d040" stroke-width="1.6"/><rect x="12.5" y="1" width="8" height="6" fill="#d0d0e0"/><rect x="13.5" y="2" width="6" height="4" fill="#30b8f0"/><rect x="12" y="7.5" width="9" height="2" fill="#a0a0b0"/><rect x="13" y="7.7" width="7" height="1" fill="#303040"/><circle cx="28.5" cy="5" r="4" fill="#f07010"/><circle cx="29" cy="4.5" r="2.3" fill="#3050b0"/><path d="M25 6 Q26 9 30 9" stroke="#ffb020" fill="none"/><circle cx="40" cy="5.5" r="2.8" fill="none" stroke="#2a80e0" stroke-width="1.6"/><path d="M37 5.5 H43" stroke="#2a80e0" stroke-width="1"/><path d="M35.5 8 Q39 1 44 2" stroke="#60a0e0" fill="none" stroke-width="0.8"/><circle cx="51" cy="5" r="3.2" fill="none" stroke="#f0b000" stroke-width="1.5"/><path d="M48 4 A3.2 3.2 0 0 1 51 1.8" stroke="#e03020" stroke-width="1.5" fill="none"/><path d="M54 6 A3.2 3.2 0 0 1 51 8.2" stroke="#2060d0" stroke-width="1.5" fill="none"/><path d="M48.5 7 A3.2 3.2 0 0 1 48 5" stroke="#30a030" stroke-width="1.5" fill="none"/><circle cx="51" cy="5" r="1.2" fill="#101010"/></svg>
<div style="left:97px;top:501px;width:1px;height:10px;background:#a0a0a0"></div>
<div style="left:98px;top:501px;width:1px;height:10px;background:#fff8e0"></div>
<div style="left:101px;top:500px;width:72px;height:11px;background:#cccccc;border-top:1px solid #fff;border-left:1px solid #fff;border-right:1px solid #404040;border-bottom:1px solid #404040;box-sizing:border-box"></div>
<svg style="left:104px;top:501.5px" width="8" height="8" viewBox="0 0 16 16"><rect width="16" height="16" fill="#cccccc"/><path d="M1 9 L5 6 L8 8 L6 11 L3 11 Z" fill="#40a8a0"/><path d="M5 14 L8 7 L11 1 L13 6 L15 12 L12 10 L8 15 Z" fill="#d02800"/><path d="M7 12 L9 6 L11 2 L12 7 L11 10 L8 12Z" fill="#ffd000"/></svg>
<div class="t" style="left:113px;top:502.9px;font-size:5.6px;color:#000;">c:\jason\soundenhanc...</div>
<div style="left:175px;top:500px;width:76px;height:11px;background:#cccccc;border-top:1px solid #fff;border-left:1px solid #fff;border-right:1px solid #404040;border-bottom:1px solid #404040;box-sizing:border-box"></div>
<svg style="left:178px;top:501.5px" width="8" height="8" viewBox="0 0 16 16"><rect width="16" height="16" fill="#cccccc"/><path d="M1 9 L5 6 L8 8 L6 11 L3 11 Z" fill="#40a8a0"/><path d="M5 14 L8 7 L11 1 L13 6 L15 12 L12 10 L8 15 Z" fill="#d02800"/><path d="M7 12 L9 6 L11 2 L12 7 L11 10 L8 12Z" fill="#ffd000"/></svg>
<div class="t" style="left:187px;top:502.9px;font-size:5.1px;color:#000;">MATLAB</div>
<div style="left:251px;top:500px;width:73px;height:11px;background:#cccccc;border-top:1px solid #fff;border-left:1px solid #fff;border-right:1px solid #404040;border-bottom:1px solid #404040;box-sizing:border-box"></div>
<svg style="left:254px;top:501.5px" width="8" height="8" viewBox="0 0 16 16"><rect width="16" height="16" fill="#000"/><path d="M1 9 L5 6 L8 8 L6 11 L3 11 Z" fill="#40a8a0"/><path d="M5 14 L8 7 L11 1 L13 6 L15 12 L12 10 L8 15 Z" fill="#d02800"/><path d="M7 12 L9 6 L11 2 L12 7 L11 10 L8 12Z" fill="#ffd000"/></svg>
<div class="t" style="left:263px;top:502.9px;font-size:5.23px;color:#000;">SoundEnhance:_C:\MA...</div>
<div style="left:326px;top:500px;width:73px;height:11px;background:#cccccc;border-top:1px solid #fff;border-left:1px solid #fff;border-right:1px solid #404040;border-bottom:1px solid #404040;box-sizing:border-box"></div>
<svg style="left:329px;top:501.5px" width="8" height="8" viewBox="0 0 16 16"><rect width="16" height="16" fill="#000"/><path d="M1 9 L5 6 L8 8 L6 11 L3 11 Z" fill="#40a8a0"/><path d="M5 14 L8 7 L11 1 L13 6 L15 12 L12 10 L8 15 Z" fill="#d02800"/><path d="M7 12 L9 6 L11 2 L12 7 L11 10 L8 12Z" fill="#ffd000"/></svg>
<div class="t" style="left:338px;top:502.9px;font-size:5.3px;color:#000;">LPC Spectra:_C:\MATL...</div>
<div style="left:401px;top:500px;width:74px;height:11px;background:#ececec;border-top:1px solid #404040;border-left:1px solid #404040;border-right:1px solid #fff;border-bottom:1px solid #fff;box-sizing:border-box"></div>
<svg style="left:404px;top:501.5px" width="8" height="8" viewBox="0 0 16 16"><rect width="16" height="16" fill="#000"/><path d="M1 9 L5 6 L8 8 L6 11 L3 11 Z" fill="#40a8a0"/><path d="M5 14 L8 7 L11 1 L13 6 L15 12 L12 10 L8 15 Z" fill="#d02800"/><path d="M7 12 L9 6 L11 2 L12 7 L11 10 L8 12Z" fill="#ffd000"/></svg>
<div class="t" style="left:413px;top:502.9px;font-size:5.6px;color:#000;font-weight:bold">Controls:_C:\MATLA...</div>
<div style="left:556px;top:500px;width:84px;height:12px;border-top:1px solid #909090;border-left:1px solid #909090;box-sizing:border-box"></div>
<svg style="left:557px;top:501px" width="47" height="10" viewBox="0 0 47 10"><path d="M1.5 7.5 Q4 9.5 8.5 7.5 L7 5.5 Q4 7 2 6Z" fill="#e8e8e8" stroke="#505050" stroke-width="0.6"/><path d="M6.5 1 L2.5 5 M2.5 2.5 V5 H5" stroke="#20a040" stroke-width="1.3" fill="none"/><path d="M10.5 4 L14.5 1 L14.5 8.5 L10.5 5.5Z" fill="#e8e040" stroke="#909020" stroke-width="0.4"/><path d="M15.5 3 Q16.5 4.7 15.5 6.5" stroke="#f0f0a0" fill="none" stroke-width="0.6"/><rect x="19.5" y="1.5" width="6" height="4" fill="#40c8e8" stroke="#202030" stroke-width="0.6"/><path d="M18 8.5 L21 6 L27 6 L25 8.5Z" fill="#404048"/><path d="M29.5 1 L35.5 1 L35.5 5.5 Q32.5 9.5 29.5 5.5Z" fill="#2030a0"/><path d="M30.5 2 L34.5 2 L34.5 5.3 Q32.5 8 30.5 5.3Z" fill="#f0f0ff"/><path d="M31 3 L32.5 6.5 L34 3" stroke="#d02020" fill="none" stroke-width="1"/><rect x="37.5" y="0.8" width="8" height="8.2" rx="1.5" fill="#1830c0"/><path d="M43.5 3 Q41.5 1.5 40 3 Q39 5 41.5 5 Q44 5.2 43 7 Q41.5 8.5 39.5 7" stroke="#a8c0ff" fill="none" stroke-width="1"/></svg>
<div class="t" style="left:611px;top:503.4px;font-size:5.5px;color:#202020;">9:52 AM</div>
</body></html>
